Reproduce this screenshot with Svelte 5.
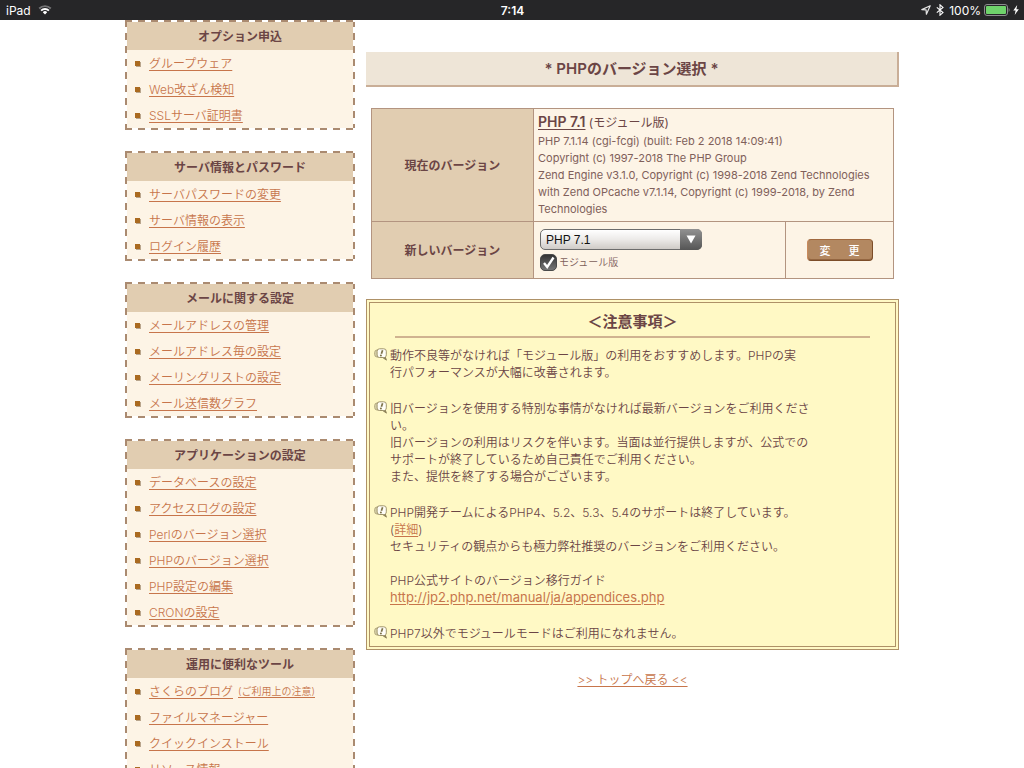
<script>
  const groups = [
    { title: 'オプション申込', items: [{ t: 'グループウェア' }, { t: 'Web改ざん検知' }, { t: 'SSLサーバ証明書' }] },
    { title: 'サーバ情報とパスワード', items: [{ t: 'サーバパスワードの変更' }, { t: 'サーバ情報の表示' }, { t: 'ログイン履歴' }] },
    { title: 'メールに関する設定', items: [{ t: 'メールアドレスの管理' }, { t: 'メールアドレス毎の設定' }, { t: 'メーリングリストの設定' }, { t: 'メール送信数グラフ' }] },
    { title: 'アプリケーションの設定', items: [{ t: 'データベースの設定' }, { t: 'アクセスログの設定' }, { t: 'Perlのバージョン選択' }, { t: 'PHPのバージョン選択' }, { t: 'PHP設定の編集' }, { t: 'CRONの設定' }] },
    { title: '運用に便利なツール', items: [{ t: 'さくらのブログ', note: '(ご利用上の注意)' }, { t: 'ファイルマネージャー' }, { t: 'クイックインストール' }, { t: 'リソース情報' }] }
  ];
  let version = $state('PHP 7.1');
  let asModule = $state(true);
</script>

{#snippet bubble()}
  <svg class="bubble" viewBox="0 0 13 13" aria-hidden="true">
    <path d="M5 2H3Q.7 2 .7 4.500v2Q.7 9 3 9h3" fill="#d9d3ac" stroke="#b0a67c" />
    <path d="M5.500.8h4.200q2.600 0 2.600 2.400v3.600q0 1.600-1 2.200l1 3-3.500-2.500H5.500q-2.400 0-2.400-2.500V3.300Q3.100.8 5.500.8z" fill="#fffef8" stroke="#a0956a" />
    <path d="M5 10h4l3.800 2.800L11.600 9z" fill="#8f845a" />
    <path d="M8.600 2.300 7.400 5.800" stroke="#7c7248" stroke-width="1.700" />
    <circle cx="6.900" cy="7.500" r="1" fill="#7c7248" />
  </svg>
{/snippet}

<div class="screen">
  <div class="status">
    <span class="left">
      <span>iPad</span>
      <svg width="14" height="12" viewBox="0 0 14 12" aria-hidden="true">
        <path d="M1.200 4.500a8.200 8.200 0 0 1 11.600 0" fill="none" stroke="#747476" stroke-width="1.800" />
        <path d="M3.100 6.600a5.500 5.500 0 0 1 7.800 0" fill="none" stroke="#fff" stroke-width="1.900" />
        <path d="M4.800 8.200a3.100 3.100 0 0 1 4.400 0L7 10.600z" fill="#fff" />
      </svg>
    </span>
    <span class="time">7:14</span>
    <span class="right">
      <svg width="10" height="10" viewBox="0 0 10 10" aria-hidden="true">
        <path d="M9.200.8.800 4.600l4.300.300.300 4.300z" fill="none" stroke="#e4e4e4" stroke-width="1.200" stroke-linejoin="round" />
      </svg>
      <svg class="bt" width="8" height="12" viewBox="0 0 8 12" aria-hidden="true">
        <path d="M.8 3.300 7 8.600 4 11.200V.8L7 3.400.8 8.700" fill="none" stroke="#fff" stroke-width="1.100" />
      </svg>
      <span>100%</span>
      <svg width="26" height="12" viewBox="0 0 26 12" aria-hidden="true">
        <rect x=".5" y=".5" width="23" height="11" rx="2.500" fill="none" stroke="#8c8c8e" />
        <rect x="2" y="2" width="20" height="8" rx="1" fill="#6fd36b" />
        <path d="M24.600 4c1.300.5 1.300 3.500 0 4z" fill="#8c8c8e" />
      </svg>
      <svg width="6" height="10" viewBox="0 0 6 10" aria-hidden="true">
        <path d="M4.200 0 .3 5.600h2.300L1.700 10 5.800 4.200H3.400z" fill="#fff" />
      </svg>
    </span>
  </div>

  <div class="page">
    <nav class="side">
      {#each groups as g}
        <section class="group">
          <h2>{g.title}</h2>
          <ul>
            {#each g.items as it}
              <li><a href="#menu">{it.t}</a>{#if it.note}<a class="note" href="#note">{it.note}</a>{/if}</li>
            {/each}
          </ul>
        </section>
      {/each}
    </nav>

    <main>
      <h1>* PHPのバージョン選択 *</h1>

      <table>
        <colgroup><col class="c1" /><col /><col class="c3" /></colgroup>
        <tbody>
          <tr>
            <th scope="row">現在のバージョン</th>
            <td colspan="2" class="current">
              <div class="ver"><strong>PHP 7.1</strong> (モジュール版)</div>
              PHP 7.1.14 (cgi-fcgi) (built: Feb 2 2018 14:09:41)<br />
              Copyright (c) 1997-2018 The PHP Group<br />
              Zend Engine v3.1.0, Copyright (c) 1998-2018 Zend Technologies<br />
              with Zend OPcache v7.1.14, Copyright (c) 1999-2018, by Zend<br />
              Technologies
            </td>
          </tr>
          <tr>
            <th scope="row"><label for="version">新しいバージョン</label></th>
            <td class="choice">
              <div class="pick">
                <select id="version" bind:value={version}>
                  <option>PHP 7.1</option>
                  <option>PHP 5.6</option>
                </select>
                <svg class="arrow" viewBox="0 0 22 20" aria-hidden="true"><path d="M6.500 6h9L11 14z" fill="#fff" /></svg>
              </div>
              <label class="check"><input type="checkbox" bind:checked={asModule} />モジュール版</label>
            </td>
            <td class="action"><button type="button"><span>変</span><span>更</span></button></td>
          </tr>
        </tbody>
      </table>

      <section class="notice">
        <h3>＜注意事項＞</h3>
        <ul>
          <li>{@render bubble()}<p>動作不良等がなければ「モジュール版」の利用をおすすめします。PHPの実<br />行パフォーマンスが大幅に改善されます。</p></li>
          <li>{@render bubble()}<p>旧バージョンを使用する特別な事情がなければ最新バージョンをご利用くださ<br />い。<br />旧バージョンの利用はリスクを伴います。当面は並行提供しますが、公式での<br />サポートが終了しているため自己責任でご利用ください。<br />また、提供を終了する場合がございます。</p></li>
          <li>{@render bubble()}<p>PHP開発チームによるPHP4、5.2、5.3、5.4のサポートは終了しています。<br />(<a href="#detail">詳細</a>)<br />セキュリティの観点からも極力弊社推奨のバージョンをご利用ください。<br /><br />PHP公式サイトのバージョン移行ガイド<br /><a class="url" href="#guide">http://jp2.php.net/manual/ja/appendices.php</a></p></li>
          <li>{@render bubble()}<p>PHP7以外でモジュールモードはご利用になれません。</p></li>
        </ul>
      </section>

      <a class="back" href="#top">&gt;&gt; トップへ戻る &lt;&lt;</a>
    </main>
  </div>
</div>

<style>
  :global(body) { margin: 0; background: #fff; }
  .screen {
    height: 100vh;
    display: flex;
    flex-direction: column;
    overflow: hidden;
    color: #6b4545;
    font: 350 12px/17px Inter, "Noto Sans CJK JP", sans-serif;
  }
  h1, h2, h3, ul, p { margin: 0; padding: 0; }
  ul { list-style: none; }
  a { color: #c7754b; text-decoration: underline; text-underline-offset: 2px; }

  .status {
    flex: none;
    height: 20px;
    box-sizing: border-box;
    padding: 0 5px 0 6px;
    display: grid;
    grid-template-columns: 1fr auto 1fr;
    align-items: center;
    background: #262628;
    color: #fff;
    font-weight: 400;
  }
  .status .left, .status .right { display: flex; align-items: center; gap: 7px; }
  .status .right { justify-content: flex-end; gap: 3px; }
  .status .bt { margin: 0 2px; }
  .status .time { font-weight: 600; }

  .page {
    flex: 1;
    min-height: 0;
    width: 100%;
    max-width: 774px;
    margin: 0 auto;
    display: flex;
    gap: 11px;
    overflow: auto;
    scrollbar-width: none;
  }
  .side { flex: 0 0 230px; display: flex; flex-direction: column; gap: 21px; }
  .group {
    --row: repeating-linear-gradient(90deg, #aa8a70 0 7px, #fff 7px 13px);
    --col: repeating-linear-gradient(#aa8a70 0 7px, #fff 7px 13px);
    padding: 2px;
    background:
      var(--row) top / 100% 2px no-repeat,
      var(--row) bottom / 100% 2px no-repeat,
      var(--col) left / 2px 100% no-repeat,
      var(--col) right / 2px 100% no-repeat;
  }
  h2 {
    padding-top: 1px;
    font-size: 12px;
    line-height: 27px;
    font-weight: 600;
    text-align: center;
    background: #e1cdb1;
  }
  .group ul { background: #fdf4e6; }
  .group li { display: flex; align-items: center; height: 26px; padding-left: 8px; }
  .group li::before {
    content: "";
    width: 5px;
    height: 5px;
    margin-right: 9px;
    background: #aa6a20;
    box-shadow: 1px 1px 0 #b9a58c;
  }
  .note { margin-left: 5px; font-size: 10px; }

  main { flex: 1; min-width: 0; display: flex; flex-direction: column; padding-top: 32px; }
  h1 {
    font-size: 15px;
    line-height: 33px;
    font-weight: 600;
    text-align: center;
    background: #eee5d7;
    border: solid #c9ae97;
    border-width: 0 2px 2px 0;
  }
  table {
    margin: 21px 5px 20px;
    border-collapse: collapse;
    table-layout: fixed;
    background: #fdf4e6;
  }
  .c1 { width: 162px; }
  .c3 { width: 108px; }
  th, td { border: 1px solid #b39480; padding: 0 4px; text-align: left; }
  th { background: #e1cdb1; text-align: center; font-weight: 600; }
  .current { height: 112px; font-size: 11px; color: #80605a; font-weight: 400; }
  .ver { font-size: 12px; line-height: 20px; color: #6b4545; }
  .ver strong { font-size: 14px; font-weight: 600; text-decoration: underline; text-underline-offset: 2px; }
  .choice { height: 56px; padding: 0 6px; }
  .pick { display: grid; width: 162px; }
  select {
    grid-area: 1 / 1;
    appearance: none;
    height: 21px;
    padding: 0 28px 0 5px;
    border: 1px solid #6c6c6c;
    border-radius: 5px;
    background: linear-gradient(#fff, #eceae8 50%, #cfcbc7);
    color: #111;
    font: 400 12px "Liberation Sans", sans-serif;
  }
  .arrow {
    grid-area: 1 / 1;
    justify-self: end;
    width: 22px;
    height: 21px;
    border-radius: 0 5px 5px 0;
    background: linear-gradient(#929292, #555);
    pointer-events: none;
  }
  .check { display: flex; align-items: center; gap: 2px; margin-top: 4px; font-size: 10px; color: #80605a; }
  .check input {
    appearance: none;
    width: 17px;
    height: 17px;
    margin: 0;
    border: 1px solid #4a4a4a;
    border-radius: 5px;
    background: linear-gradient(#333, #777);
  }
  .check input:checked {
    background:
      url("data:image/svg+xml,%3Csvg xmlns='http://www.w3.org/2000/svg' viewBox='0 0 15 15'%3E%3Cpath d='M3 8l3.200 4L12.500 2.500' fill='none' stroke='white' stroke-width='2.300'/%3E%3C/svg%3E"),
      linear-gradient(#333, #777);
  }
  .action { text-align: center; }
  button {
    width: 66px;
    height: 22px;
    padding: 0 12px;
    display: inline-flex;
    justify-content: space-between;
    align-items: center;
    border: 1px solid;
    border-color: #a0683f #7c4d29 #7c4d29 #c98a5c;
    border-radius: 4px;
    background: #b38861;
    box-shadow: inset 0 -1px #946641;
    color: #fff;
    font: 500 11px "Noto Sans CJK JP", sans-serif;
  }

  .notice { border: 4px double #ae9167; background: #fff9c5; padding: 9px 4px 4px; }
  h3 {
    margin: 0 21px;
    padding-bottom: 4px;
    border-bottom: 2px solid #d0b390;
    font-size: 15px;
    line-height: 20px;
    font-weight: 600;
    text-align: center;
  }
  .notice ul { display: flex; flex-direction: column; gap: 19px; margin-top: 9px; }
  .notice li { display: flex; gap: 3px; }
  .bubble { flex: none; width: 13px; height: 13px; margin-top: 1px; }
  .url { font-size: 13px; font-weight: 400; }
  .back { align-self: center; margin-top: 21px; }
</style>
